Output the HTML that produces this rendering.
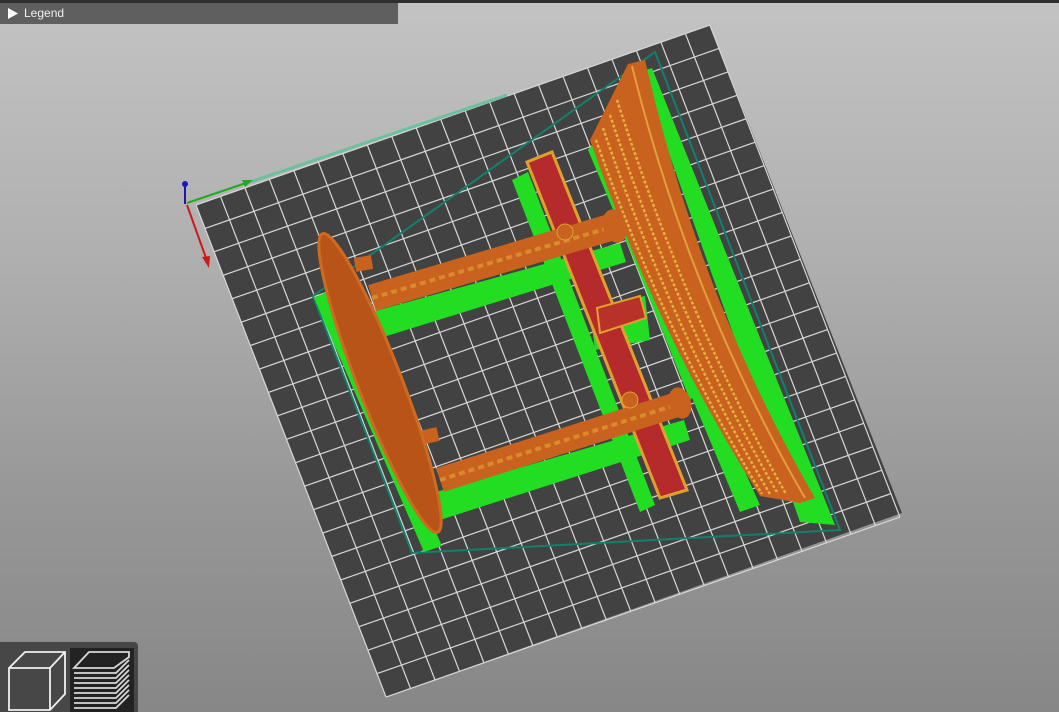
<!DOCTYPE html>
<html><head><meta charset="utf-8"><style>
html,body{margin:0;padding:0;width:1059px;height:712px;overflow:hidden;}
body{background:linear-gradient(#c3c3c3 0%,#b0b0b0 35%,#979797 70%,#878787 100%);position:relative;font-family:"Liberation Sans",sans-serif;}
#top{position:absolute;left:0;top:0;width:1059px;height:3px;background:#2e2e2e;}
#legend{position:absolute;left:0;top:3px;width:398px;height:21px;background:#5f5f5f;color:#f0f0f0;font-size:12px;line-height:21px;}
#legend span{position:absolute;left:24px;top:0;}
#tb{position:absolute;left:0;top:642px;width:138px;height:70px;background:#474747;border-top-right-radius:4px;}
svg{position:absolute;left:0;top:0;}
</style></head><body>
<div id="top"></div>
<svg width="1059" height="712" viewBox="0 0 1059 712">
<polygon points="196,205 710,25 902,513 386,697" fill="#424242"/>
<g transform="matrix(24.47,-8.57,9.05,23.43,196,205)" stroke="#d8d8d8" stroke-width="1.2" fill="none">
<path vector-effect="non-scaling-stroke" d="M0,0V21M1,0V21M2,0V21M3,0V21M4,0V21M5,0V21M6,0V21M7,0V21M8,0V21M9,0V21M10,0V21M11,0V21M12,0V21M13,0V21M14,0V21M15,0V21M16,0V21M17,0V21M18,0V21M19,0V21M20,0V21M21,0V21M0,0H21M0,1H21M0,2H21M0,3H21M0,4H21M0,5H21M0,6H21M0,7H21M0,8H21M0,9H21M0,10H21M0,11H21M0,12H21M0,13H21M0,14H21M0,15H21M0,16H21M0,17H21M0,18H21M0,19H21M0,20H21M0,21H21"/>
</g>
<line x1="250" y1="182" x2="507" y2="95" stroke="#6cc0a0" stroke-width="3"/>
<polygon points="313,296 655,52 840,530 412,553" fill="none" stroke="#13806c" stroke-width="2"/>
<g fill="#22dd22">
<polygon points="314,298 330,290 442,546 424,552"/>
<polygon points="372,312 620,243 626,262 380,338"/>
<polygon points="436,492 684,420 690,440 440,520"/>
<polygon points="512,180 528,172 655,505 640,512"/>
<polygon points="590,150 600,140 700,390 690,400"/>
<polygon points="640,72 652,68 835,525 800,522"/>
<polygon points="588,150 596,140 760,505 740,512"/>
<polygon points="590,310 645,296 650,340 595,350"/>
</g>
<polygon points="527,162 552,152 687,490 660,498" fill="#b52a2a" stroke="#e0a030" stroke-width="3"/>
<polygon points="597,308 640,296 646,318 600,333" fill="#b8322a" stroke="#e0a030" stroke-width="2"/>
<line x1="372" y1="298" x2="622" y2="224" stroke="#c8621e" stroke-width="27"/>
<line x1="372" y1="298" x2="622" y2="224" stroke="#d98a2c" stroke-width="4" stroke-dasharray="6 4"/>
<ellipse cx="615" cy="226" rx="12" ry="17" fill="#c8621e" transform="rotate(-16 615 226)"/>
<circle cx="565" cy="232" r="8" fill="#c8621e" stroke="#e0a030"/>
<line x1="440" y1="480" x2="685" y2="402" stroke="#c8621e" stroke-width="25"/>
<line x1="440" y1="480" x2="685" y2="402" stroke="#d98a2c" stroke-width="4" stroke-dasharray="6 4"/>
<ellipse cx="680" cy="403" rx="11" ry="16" fill="#c8621e" transform="rotate(-16 680 403)"/>
<circle cx="630" cy="400" r="8" fill="#c8621e" stroke="#e0a030"/>
<line x1="355" y1="265" x2="372" y2="262" stroke="#c8621e" stroke-width="14"/>
<line x1="420" y1="438" x2="438" y2="434" stroke="#c8621e" stroke-width="14"/>
<ellipse cx="380" cy="383" rx="160" ry="22" fill="#b85418" stroke="#d06a20" stroke-width="3" transform="rotate(68.9 380 383)"/>
<path d="M628,64 L645,60 Q700,300 815,498 L800,503 L760,496 Q660,340 590,140 L605,110 Z" fill="#c8621e"/>
<path d="M596,140 Q665,335 762,494" fill="none" stroke="#e8b040" stroke-width="2.5" stroke-dasharray="3 2"/>
<path d="M603,128 Q672,330 770,494" fill="none" stroke="#e8b040" stroke-width="2.5" stroke-dasharray="3 2"/>
<path d="M610,115 Q680,325 778,494" fill="none" stroke="#e8b040" stroke-width="2.5" stroke-dasharray="3 2"/>
<path d="M617,100 Q688,320 786,494" fill="none" stroke="#e8b040" stroke-width="2.5" stroke-dasharray="3 2"/>
<path d="M632,66 Q690,300 805,498" fill="none" stroke="#e0a040" stroke-width="2"/>
<line x1="185" y1="183" x2="185" y2="204" stroke="#1a1aa0" stroke-width="2"/>
<circle cx="185" cy="184" r="3" fill="#1a1ab8"/>
<line x1="187" y1="203" x2="246" y2="183" stroke="#22aa22" stroke-width="2"/>
<polygon points="253,180 242,180 245,187" fill="#22aa22"/>
<line x1="187" y1="205" x2="206" y2="258" stroke="#cc1a1a" stroke-width="2"/>
<polygon points="209,268 202,257 210,256" fill="#cc1a1a"/>
</svg>
<div id="legend"><svg width="14" height="21" style="left:6px;top:0"><polygon points="2,5 12,10.5 2,16" fill="#fff"/></svg><span>Legend</span></div>
<div id="tb">
<svg width="138" height="70" style="left:0;top:0">
<rect x="70" y="6" width="64" height="64" fill="#232323"/>
<g fill="none" stroke="#f0f0f0" stroke-width="1.8">
<path d="M9,26 L25,10 L65,10 L65,52 L50,68 L9,68 Z M9,26 L50,26 L50,68 M50,26 L65,10"/>
</g>
<g fill="none" stroke="#d8d8d8" stroke-width="1.8">
<path d="M74,26 L89,10 L129,10 L129,15 L114,26 Z"/>
<path d="M74,31H116L129,18M74,36H116L129,23M74,41H116L129,28M74,46H116L129,33M74,51H116L129,38M74,56H116L129,43M74,61H116L129,48M74,66H116L129,53"/>
</g>
</svg>
</div>
</body></html>
